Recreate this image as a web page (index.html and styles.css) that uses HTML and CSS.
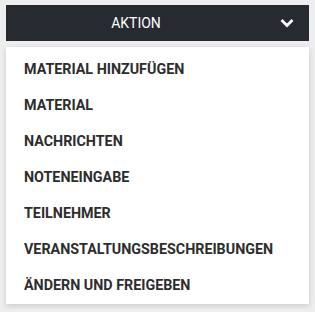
FILE: index.html
```html
<!DOCTYPE html>
<html>
<head>
<meta charset="utf-8">
<title>Aktion</title>
<link rel="stylesheet" href="styles.css">
</head>
<body>
  <div class="action-menu">
    <button class="action-toggle" type="button">
      <span class="action-label">AKTION</span>
      <svg class="chevron" width="14" height="10" viewBox="0 0 14 10">
        <path d="M1.5 2 L7 7.5 L12.5 2" fill="none" stroke="#fff" stroke-width="2.8"/>
      </svg>
    </button>
    <ul class="action-list">
      <li><a href="#">MATERIAL HINZUFÜGEN</a></li>
      <li><a href="#">MATERIAL</a></li>
      <li><a href="#">NACHRICHTEN</a></li>
      <li><a href="#">NOTENEINGABE</a></li>
      <li><a href="#">TEILNEHMER</a></li>
      <li><a href="#">VERANSTALTUNGSBESCHREIBUNGEN</a></li>
      <li><a href="#">ÄNDERN UND FREIGEBEN</a></li>
    </ul>
  </div>
</body>
</html>
```

FILE: styles.css
```css
body {
    margin: 0;
    background-color: #eeeeee;
    font-family: Roboto, "Liberation Sans", sans-serif;
}

.action-menu {
    padding: 5px 6px;
}

.action-toggle {
    display: flex;
    align-items: center;
    width: 100%;
    height: 36px;
    padding: 0 15px 0 0;
    border: none;
    background-color: #272a30;
    color: #fff;
    font-family: inherit;
    font-size: 14px;
    cursor: pointer;
}

.action-label {
    flex: 1;
    text-align: center;
    padding-right: 14px;
}

.chevron {
    display: block;
}

.action-list {
    list-style: none;
    margin: 6px 0 0;
    padding: 4px 0 1px;
    background-color: #fff;
    box-shadow: 0px 2px 6px rgba(0, 0, 0, 0.15);
}

.action-list li a {
    display: flex;
    align-items: center;
    height: 36px;
    padding-left: 18px;
    color: #2d2d2d;
    font-size: 14.3px;
    font-weight: bold;
    text-decoration: none;
}
```
